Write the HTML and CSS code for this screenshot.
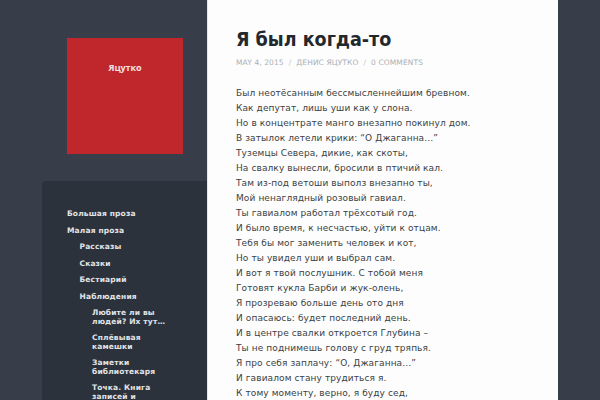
FILE: index.html
```html
<!DOCTYPE html>
<html>
<head>
<meta charset="utf-8">
<link rel="stylesheet" href="styles.css">
</head>
<body>
<div class="page">
  <aside class="sidebar">
    <div class="logo-wrap">
      <div class="logo"><span class="logo-text">Яцутко</span></div>
    </div>
    <nav class="menu">
      <ul class="lvl1">
        <li><a>Большая проза</a></li>
        <li><a>Малая проза</a>
          <ul class="lvl2">
            <li><a>Рассказы</a></li>
            <li><a>Сказки</a></li>
            <li><a>Бестиарий</a></li>
            <li><a>Наблюдения</a>
              <ul class="lvl3">
                <li><a>Любите ли вы людей? Их тут…</a></li>
                <li><a>Сплёвывая камешки</a></li>
                <li><a>Заметки библиотекаря</a></li>
                <li><a>Точка. Книга записей и наблюдений</a></li>
              </ul>
            </li>
          </ul>
        </li>
      </ul>
    </nav>
  </aside>
  <main class="content">
    <h1 class="title">Я был когда-то</h1>
    <div class="meta"><span>May 4, 2015</span><span class="sep">/</span><span>Денис Яцутко</span><span class="sep">/</span><span>0 Comments</span></div>
    <div class="poem">
      <p>Был неотёсанным бессмысленнейшим бревном.</p>
      <p>Как депутат, лишь уши как у слона.</p>
      <p>Но в концентрате манго внезапно покинул дом.</p>
      <p>В затылок летели крики: “О Джаганна…”</p>
      <p>Туземцы Севера, дикие, как скоты,</p>
      <p>На свалку вынесли, бросили в птичий кал.</p>
      <p>Там из-под ветоши выполз внезапно ты,</p>
      <p>Мой ненаглядный розовый гавиал.</p>
      <p>Ты гавиалом работал трёхсотый год.</p>
      <p>И было время, к несчастью, уйти к отцам.</p>
      <p>Тебя бы мог заменить человек и кот,</p>
      <p>Но ты увидел уши и выбрал сам.</p>
      <p>И вот я твой послушник. С тобой меня</p>
      <p>Готовят кукла Барби и жук-олень,</p>
      <p>Я прозреваю больше день ото дня</p>
      <p>И опасаюсь: будет последний день.</p>
      <p>И в центре свалки откроется Глубина –</p>
      <p>Ты не поднимешь голову с груд тряпья.</p>
      <p>Я про себя заплачу: “О, Джаганна…”</p>
      <p>И гавиалом стану трудиться я.</p>
      <p>К тому моменту, верно, я буду сед,</p>
      <p>Но ты не бойся: я буду тебе под стать.</p>
    </div>
  </main>
  <div class="right"></div>
</div>
</body>
</html>
```
FILE: styles.css
```css
html, body {
  margin: 0;
  padding: 0;
  background: #373e49;
  overflow: hidden;
  height: 400px;
}
body {
  font-family: "DejaVu Sans", sans-serif;
}
.page {
  display: flex;
  width: 600px;
  height: 400px;
}
.sidebar {
  width: 207px;
  flex: none;
  display: flex;
  flex-direction: column;
}
.logo-wrap {
  padding: 38px 0 0 67px;
  height: 181px;
  flex: none;
  box-sizing: border-box;
}
.logo {
  width: 116px;
  height: 116px;
  background: #c0272d;
  text-align: center;
}
.logo-text {
  display: block;
  padding-top: 23px;
  color: #f3e3e3;
  font-family: "Open Sans", sans-serif;
  font-weight: 700;
  font-size: 9px;
  letter-spacing: -0.1px;
}
.menu {
  margin-left: 42px;
  flex: 1;
  background: #2c323b;
  border-top-left-radius: 4px;
  padding: 29px 0 0 25px;
}
.menu ul {
  list-style: none;
  margin: 0;
  padding: 0;
}
.menu a {
  display: block;
  color: #e2e4e7;
  font-size: 7.5px;
  font-weight: 700;
  line-height: 8.5px;
  padding: 0 0 8px;
  letter-spacing: 0.15px;
}
.menu .lvl2 { padding-left: 12.5px; }
.menu .lvl3 { padding-left: 12.5px; }
.lvl3 a {
  width: 84px;
}
.content {
  width: 351px;
  flex: none;
  background: #fdfdfd;
  border-left: 1px solid #e3e6ea;
  box-sizing: border-box;
  padding: 26px 0 0 28px;
}
.title {
  margin: 0;
  font-family: "DejaVu Sans Condensed", "DejaVu Sans", sans-serif;
  font-stretch: condensed;
  font-weight: 700;
  font-size: 19.5px;
  line-height: 28px;
  color: #23282d;
}
.meta {
  margin-top: 4px;
  font-size: 7.5px;
  text-transform: uppercase;
  color: #aab0b5;
  letter-spacing: 0.1px;
}
.meta .sep {
  margin: 0 5px;
  color: #c5c9cd;
}
.poem {
  margin-top: 19px;
  font-size: 9px;
  color: #3a3f44;
  letter-spacing: 0.1px;
}
.poem p {
  margin: 0;
  line-height: 15px;
}
.right {
  flex: 1;
}
```
